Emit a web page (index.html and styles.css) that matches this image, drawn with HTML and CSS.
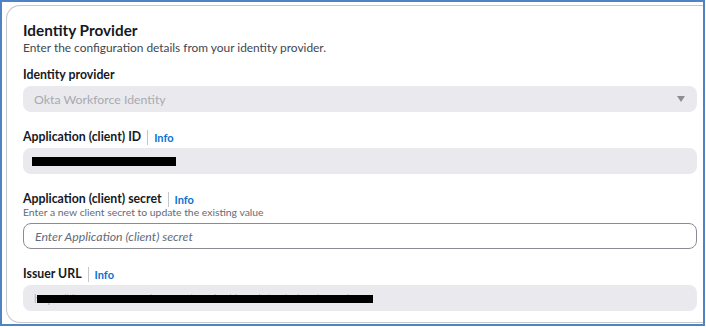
FILE: index.html
```html
<!DOCTYPE html>
<html lang="en">
<head>
  <meta charset="UTF-8">
  <title>Identity Provider</title>
  <link rel="stylesheet" href="styles.css">
</head>
<body>
  <div class="moldura">
    <section class="card">
      <h2>Identity Provider</h2>
      <p class="descricao">Enter the configuration details from your identity provider.</p>

      <div class="campo">
        <div class="cabecalho">
          <label>Identity provider</label>
        </div>
        <div class="entrada desativada select">
          <span class="texto-claro">Okta Workforce Identity</span>
          <span class="seta"></span>
        </div>
      </div>

      <div class="campo">
        <div class="cabecalho">
          <label>Application (client) ID</label>
          <span class="sep"></span>
          <a href="#" class="info">Info</a>
        </div>
        <div class="entrada desativada">
          <span class="tarja" style="width: 144px;"></span>
        </div>
      </div>

      <div class="campo">
        <div class="cabecalho">
          <label>Application (client) secret</label>
          <span class="sep"></span>
          <a href="#" class="info">Info</a>
        </div>
        <p class="ajuda">Enter a new client secret to update the existing value</p>
        <input type="text" class="entrada editavel" placeholder="Enter Application (client) secret">
      </div>

      <div class="campo">
        <div class="cabecalho">
          <label>Issuer URL</label>
          <span class="sep"></span>
          <a href="#" class="info">Info</a>
        </div>
        <div class="entrada desativada">
          <span class="url-borrada">https://dev-12345678.okta.com/oauth2/default/v1/token/aus1abc</span>
          <span class="tarja tarja-url" style="width: 336px;"></span>
        </div>
      </div>
    </section>
  </div>
</body>
</html>
```

FILE: styles.css
```css
:root {
  --cinza-borda: #c6c6cd;
  --cinza-campo: #e9e9ee;
  --texto: #16191f;
  --texto-suave: #5f6b7a;
  --azul-info: #0972d3;
  --azul-moldura: #4f84c4;
}

* {
  box-sizing: border-box;
}

body {
  margin: 0;
  background: #fff;
  font-family: Lato, "Open Sans", sans-serif;
  color: var(--texto);
}

.moldura {
  width: 705px;
  height: 326px;
  border: 2px solid var(--azul-moldura);
  padding: 3px 0 0 4px;
  overflow: hidden;
}

.card {
  height: 318px;
  border: 1px solid var(--cinza-borda);
  border-right: none;
  border-radius: 14px 0 0 14px;
  padding: 14px 6px 0 16px;
}

.card h2 {
  margin: 0;
  font-size: 15.3px;
  line-height: 20px;
  font-weight: bold;
}

.descricao {
  margin: 0 0 12px;
  font-size: 11.9px;
  line-height: 16px;
  color: #414750;
}

.campo {
  margin-bottom: 18px;
}

.cabecalho {
  display: flex;
  align-items: center;
  height: 14px;
  margin-bottom: 4px;
}

.cabecalho label {
  font-size: 12.3px;
  font-weight: bold;
  line-height: 14px;
}

.sep {
  width: 1px;
  height: 15px;
  background: var(--cinza-borda);
  margin: 0 6px 0 6px;
}

.info {
  color: var(--azul-info);
  font-size: 11px;
  font-weight: bold;
  text-decoration: none;
}

.ajuda {
  margin: -4px 0 4px;
  font-size: 10.4px;
  line-height: 13px;
  color: var(--texto-suave);
}

.entrada {
  display: flex;
  align-items: center;
  width: 100%;
  height: 26px;
  border-radius: 8px;
  padding: 0 11px;
  font-family: Lato, "Open Sans", sans-serif;
  font-size: 12.3px;
}

.desativada {
  background: var(--cinza-campo);
  position: relative;
}

.select {
  justify-content: space-between;
}

.texto-claro {
  color: #a9a9b0;
}

.seta {
  width: 0;
  height: 0;
  border-left: 4.5px solid transparent;
  border-right: 4.5px solid transparent;
  border-top: 6px solid #8d8d95;
  margin-right: 1px;
}

.editavel {
  border: 1px solid #8c8c94;
  background: #fff;
  outline: none;
  color: var(--texto);
}

.editavel::placeholder {
  color: var(--texto-suave);
  font-style: italic;
}

.tarja {
  display: block;
  height: 9px;
  background: #000;
  margin-left: -2px;
}

.url-borrada {
  color: #b3b3ba;
  font-size: 11px;
  white-space: nowrap;
  filter: blur(0.6px);
}

.tarja-url {
  position: absolute;
  left: 14px;
  top: 10px;
  height: 8px;
  margin-left: 0;
}
```
